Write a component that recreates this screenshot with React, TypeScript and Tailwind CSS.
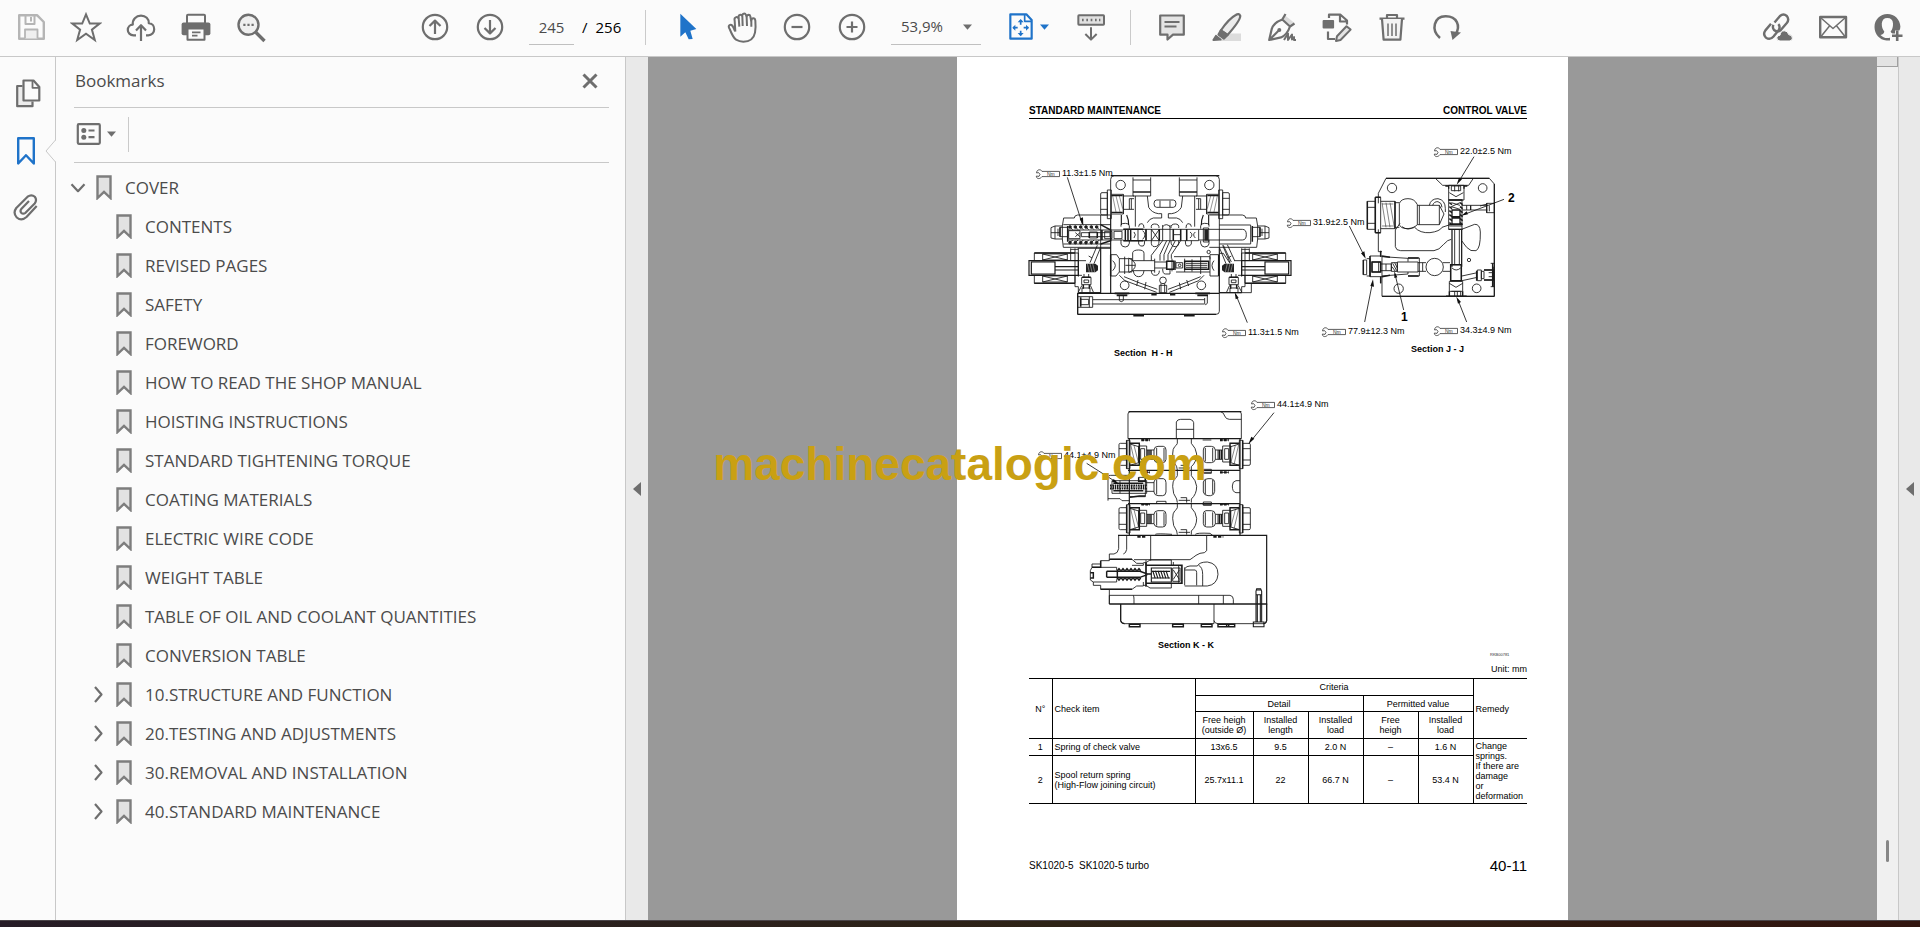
import React, { useState } from "react";

const SANS = "font-['Open_Sans','Noto_Sans',sans-serif]";
const ARIAL = "font-['Liberation_Sans',Arial,sans-serif]";

type IconProps = { viewBox?: string; className?: string; children: React.ReactNode };

function Icon({ viewBox = "0 0 32 32", className = "size-8", children }: IconProps) {
  return (
    <svg
      viewBox={viewBox}
      className={`${className} block shrink-0`}
      fill="none"
      stroke="currentColor"
      strokeWidth="2.2"
      strokeLinejoin="round"
      aria-hidden="true"
    >
      {children}
    </svg>
  );
}

function Tool({ label, wide = "w-[55px]", children }: { label: string; wide?: string; children: React.ReactNode }) {
  return (
    <button type="button" aria-label={label} className={`${wide} flex h-11 shrink-0 items-center justify-center text-[#6e6e6e]`}>
      {children}
    </button>
  );
}

function Caret({ className = "" }: { className?: string }) {
  return (
    <svg viewBox="0 0 9 6" className={`h-[6px] w-[9px] shrink-0 ${className}`} fill="currentColor" aria-hidden="true">
      <path d="M0 0.5H9L4.5 5.8Z" />
    </svg>
  );
}

function Toolbar() {
  const [page, setPage] = useState("245");
  return (
    <header className="flex h-[57px] shrink-0 items-center border-b border-[#c8c8c8] bg-[#fbfbfb] pb-[2px] pl-[3px] pr-[5px]">
      <Tool label="Save">
        <Icon className="size-8 text-[#b5b5b5]">
          <path d="M4.2 4.2H22L28.8 11V27.8H4.2Z" strokeWidth="2.4" />
          <path d="M10.5 4.5V13H19.5V4.5M16 6V10.5" strokeWidth="2" />
          <path d="M10 27.5V18.5H22.5V27.5" strokeWidth="1.8" fill="#efefef" />
        </Icon>
      </Tool>
      <Tool label="Star">
        <Icon>
          <path d="M16 3.4L19.8 12.6H29.6L21.9 18.6L24.8 29L16 22.8L7.2 29L10.1 18.6L2.4 12.6H12.2Z" strokeWidth="2" strokeLinejoin="miter" />
        </Icon>
      </Tool>
      <Tool label="Upload to cloud">
        <Icon>
          <path d="M11 24.3H8.6C5 24.3 2.8 21.7 2.8 18.9C2.8 16 5 13.7 7.8 13.6C7.3 8.4 11 4.6 16 4.6C20.7 4.6 24 8 23.8 12.2C27 12.4 29.2 15 29.2 18.2C29.2 21.6 26.7 24.3 23.3 24.3H21" />
          <path d="M16 30V14.5M11 19.5L16 14.2L21 19.5" />
        </Icon>
      </Tool>
      <Tool label="Print">
        <Icon>
          <rect x="7" y="3.8" width="18" height="9" rx="1" strokeWidth="2" />
          <path d="M3.6 11.5H28.4Q30.4 11.5 30.4 13.5V22.5Q30.4 24.3 28.4 24.3H3.6Q1.6 24.3 1.6 22.5V13.5Q1.6 11.5 3.6 11.5Z" fill="currentColor" stroke="none" />
          <rect x="7.5" y="17.5" width="17" height="11.3" fill="#fbfbfb" strokeWidth="2" />
          <path d="M12 21.3H20.5M12 24.6H17.5" strokeWidth="1.8" />
        </Icon>
      </Tool>
      <Tool label="Find">
        <Icon>
          <circle cx="13.5" cy="13.8" r="10" strokeWidth="2.4" fill="#efefef" />
          <path d="M21 21.5L29.5 30" strokeWidth="3.4" />
          <path d="M8.3 13.8h2.2M12.4 13.8h2.2M16.5 13.8h2.2" />
        </Icon>
      </Tool>

      <div className="w-[129px] shrink-0" />
      <Tool label="Previous page">
        <Icon>
          <circle cx="16" cy="16" r="12.2" />
          <path d="M16 23V10M10.5 15L16 9.6L21.5 15" />
        </Icon>
      </Tool>
      <Tool label="Next page">
        <Icon>
          <circle cx="16" cy="16" r="12.2" />
          <path d="M16 9V22M10.5 17L16 22.4L21.5 17" />
        </Icon>
      </Tool>
      <div className={`${SANS} ml-3 flex h-11 w-[92px] shrink-0 items-center text-[15px] text-black`}>
        <input
          aria-label="Page number"
          value={page}
          onChange={(e) => setPage(e.target.value)}
          className="h-9 w-[45px] border-b border-[#c0c0c0] bg-transparent text-center text-[15px] text-[#4b4b4b] outline-none"
        />
        <span className="ml-2">/</span>
        <span className="ml-2">256</span>
      </div>

      <div className="ml-6 h-[35px] w-px shrink-0 bg-[#cacaca]" />
      <div className="w-[13px] shrink-0" />
      <Tool label="Select">
        <Icon viewBox="153 33 96 96">
          <path d="M181 41V110L196 97L206 118L218 117L211 92L229 87Z" fill="#1f73c9" stroke="none" />
        </Icon>
      </Tool>
      <Tool label="Pan">
        <Icon viewBox="318 33 96 96">
          <path
            d="M345 93L340 82Q335 71 328 76Q324 79 329 87Q340 114 348 119Q358 125 370 125Q400 125 405 98Q408 84 406 62Q405 55 400 55Q394 55 394 63V80M394 66L391 49Q390 44 386 44Q379 45 380 53L381 78M380 52L378 45Q376 40 371 41Q366 42 367 48L368 78M367 49Q364 43 359 45Q355 46 356 53L358 80M357 58Q353 49 347 52Q342 54 344 62L346 95"
            strokeWidth="6"
          />
        </Icon>
      </Tool>
      <Tool label="Zoom out">
        <Icon>
          <circle cx="16" cy="16" r="12.2" />
          <path d="M10.5 16h11" />
        </Icon>
      </Tool>
      <Tool label="Zoom in">
        <Icon>
          <circle cx="16" cy="16" r="12.2" />
          <path d="M10.5 16h11M16 10.5v11" />
        </Icon>
      </Tool>
      <div className="ml-3 flex h-9 w-[90px] shrink-0 items-center border-b border-[#c0c0c0]">
        <select aria-label="Zoom level" className={`${SANS} w-[68px] appearance-none bg-transparent pl-[10px] text-[15px] text-[#4b4b4b] outline-none`}>
          <option>53,9%</option>
        </select>
        <Caret className="ml-1 text-[#6e6e6e]" />
      </div>
      <div className="w-4 shrink-0" />
      <Tool label="Fit page" wide="w-[60px]">
        <Icon viewBox="1158 33 96 96" className="size-8 text-[#1f73c9]">
          <path d="M1174 43H1222L1238 60V116H1174Z" strokeWidth="6.5" />
          <path d="M1217 43V64H1238" strokeWidth="5" />
          <path d="M1205 60V74M1205 92V106M1182 83H1196M1214 83H1228" strokeWidth="5" />
          <path d="M1196 67L1205 57L1214 67ZM1196 99L1205 109L1214 99ZM1189 74L1180 83L1189 92ZM1221 74L1230 83L1221 92Z" fill="currentColor" stroke="none" />
        </Icon>
        <Caret className="ml-[3px] text-[#1f73c9]" />
      </Tool>
      <div className="w-[6px] shrink-0" />
      <Tool label="Read mode">
        <Icon viewBox="1368 33 96 96">
          <rect x="1378" y="46" width="77" height="28" rx="2" fill="#e0e0e0" strokeWidth="6" />
          <path d="M1389 60h5M1402 60h5M1415 60h5M1428 60h5M1440 60h4" strokeWidth="7" />
          <path d="M1416 82V118M1399 102L1416 119L1433 102" strokeWidth="6" />
        </Icon>
      </Tool>

      <div className="ml-3 h-[35px] w-px shrink-0 bg-[#cacaca]" />
      <div className="w-[13px] shrink-0" />
      <Tool label="Comment">
        <Icon>
          <path d="M4.2 4.5H27.8V23.7H17L11.5 28.5V23.7H4.2Z" fill="#e4e4e4" />
          <path d="M8.5 11h15M8.5 15.5h12" strokeWidth="1.8" />
        </Icon>
      </Tool>
      <Tool label="Highlight">
        <Icon>
          <path d="M14 22.5H30V30H9Z" fill="#dcdcdc" stroke="none" />
          <path d="M24.8 4Q28 1.8 29.3 5Q29 10 16.5 24L9.8 19.5Q18 7.5 24.8 4Z" fill="#ececec" />
          <path d="M9.8 19.5L16.5 24L13 27.5L7.5 23.5Z" fill="currentColor" />
          <path d="M5 25L9.5 28.5L2.5 29Z" fill="currentColor" />
        </Icon>
      </Tool>
      <Tool label="Sign">
        <Icon>
          <path d="M18.5 4L28.5 12L24 14.5L16.5 7.5Z" fill="#dcdcdc" stroke="none" />
          <path d="M19.5 3L16.3 8.5M16.3 8.5L24 15.5L28.5 12.5M16.3 8.5Q7 12 5.6 18.5L3.2 29L15 26.4Q21 24 24 15.5M3.5 28.8L12.5 19.8" />
          <circle cx="13.3" cy="19" r="2" fill="currentColor" stroke="none" />
          <path d="M18 29L22 22.5V29L26 23.5V28.5L28 26V29H30" strokeWidth="2" />
        </Icon>
      </Tool>
      <Tool label="Edit PDF">
        <Icon>
          <path d="M8 7V3.7H19.5L26 9.5V13.5M19 4V10.5H26" />
          <rect x="1.6" y="9" width="11.5" height="8.5" rx="1" fill="currentColor" stroke="none" />
          <path d="M7 20.5V28H14" />
          <path d="M25.5 15.2L29.6 18.6L19.5 29L15 30L16 25.3Z" fill="#e4e4e4" strokeWidth="2" />
        </Icon>
      </Tool>
      <Tool label="Delete">
        <Icon>
          <path d="M3.5 7.7h25M11 7.2V4H21V7.2" />
          <path d="M6 8L7.6 28.7H24.4L26 8" fill="#f3f3f3" />
          <path d="M12 12.5V25M16 12.5V25M20 12.5V25" strokeWidth="1.5" />
        </Icon>
      </Tool>
      <Tool label="Rotate">
        <Icon>
          <path d="M9 27C-0.5 19 3 5.3 14.5 5.2C26 5 30 15 24.5 23.5" strokeWidth="2.5" />
          <path d="M19.5 20L30 21.5L21.5 29Z" fill="currentColor" stroke="none" />
        </Icon>
      </Tool>
      <div className="min-w-0 flex-1" />
      <Tool label="Share link">
        <Icon>
          <path d="M12.5 11.5L18 5Q21.5 2 24.8 5Q27.6 8.4 24.8 12L18.8 19Q15.3 21.8 12 19Q10 16.5 11.5 13.8" strokeWidth="2.4" />
          <path d="M16.3 13.2Q18.6 15.6 16.8 19L11.5 25.5Q8 29.6 3.9 26.6Q0.6 23.4 3.4 19.4L9 12.8" strokeWidth="2.4" />
          <path d="M18 30Q14.5 29.8 14.8 26.7Q15.2 24.2 18 24.2Q18.5 19.8 22.3 19.8Q26 19.8 26.7 23.6Q30.5 24 30.4 27.2Q30.2 30 27.2 30Z" fill="currentColor" stroke="#fbfbfb" strokeWidth="1" />
        </Icon>
      </Tool>
      <Tool label="Send by email">
        <Icon>
          <rect x="3.2" y="6" width="25.8" height="20.3" strokeWidth="2.4" />
          <path d="M4 7L16 17.5L28 7M4 25.5L12.5 15M28 25.5L19.7 15" strokeWidth="1.5" />
        </Icon>
      </Tool>
      <Tool label="Account">
        <Icon>
          <path d="M15.5 3C8 3 2.5 8.6 2.5 16C2.5 23 7.5 29 14.5 29.5H18V26.8Q12 28 8.5 24Q12 23 12.3 20.5Q9.6 17.5 9.8 12.3Q10.5 7 15.3 7Q20.7 7 21 12.5Q21.2 17.5 18.6 20.5Q19 22 20.5 22.5H23V19.5H27.3Q28.4 17.6 28.4 15.5C28 8.3 22.5 3 15.5 3Z" fill="currentColor" stroke="none" />
          <path d="M25.2 19.5V30M20 24.7H30.5" strokeWidth="2.6" />
        </Icon>
      </Tool>
    </header>
  );
}

function Rail() {
  return (
    <nav aria-label="Panels" className="relative flex w-14 shrink-0 flex-col items-start gap-[26px] border-r border-[#c8c8c8] bg-[#fbfbfb] pl-3 pt-5">
      <button type="button" aria-label="Page thumbnails" className="text-[#6e6e6e]">
        <Icon>
          <path d="M10.5 9H5.2V29.2H20.5V24.5" fill="#ececec" />
          <path d="M11.5 3.5H21.5L27.3 10V23.5H11.5Z" fill="#fbfbfb" />
          <path d="M20.5 4V10.8H27" strokeWidth="1.8" />
        </Icon>
      </button>
      <button type="button" aria-label="Bookmarks" className="text-[#1f73c9]">
        <Icon>
          <path d="M6.2 3.2H21.8V28.5L14 20.2L6.2 28.5Z" strokeWidth="2.4" />
        </Icon>
      </button>
      <button type="button" aria-label="Attachments" className="text-[#6e6e6e]">
        <Icon>
          <path
            d="M24.7 13L14.5 24Q9.5 28.5 4.8 24.5Q.6 20 4.3 15L15.6 3.7Q19.5 .8 22.8 3.8Q25.3 7 22.7 10.5L13.5 19.8Q11 21.5 9.2 19.7Q7.7 17.8 9.5 15.7L17 8"
          />
        </Icon>
      </button>
      <svg viewBox="0 0 11 22" className="absolute -right-px top-[83px] h-[22px] w-[11px]" aria-hidden="true">
        <path d="M11 0L1 11L11 22Z" fill="#fbfbfb" />
        <path d="M10.5 0L1 11L10.5 22" fill="none" stroke="#c8c8c8" />
      </svg>
    </nav>
  );
}

const BOOKMARKS = [
  { title: "CONTENTS" },
  { title: "REVISED PAGES" },
  { title: "SAFETY" },
  { title: "FOREWORD" },
  { title: "HOW TO READ THE SHOP MANUAL" },
  { title: "HOISTING INSTRUCTIONS" },
  { title: "STANDARD TIGHTENING TORQUE" },
  { title: "COATING MATERIALS" },
  { title: "ELECTRIC WIRE CODE" },
  { title: "WEIGHT TABLE" },
  { title: "TABLE OF OIL AND COOLANT QUANTITIES" },
  { title: "CONVERSION TABLE" },
  { title: "10.STRUCTURE AND FUNCTION", nested: true },
  { title: "20.TESTING AND ADJUSTMENTS", nested: true },
  { title: "30.REMOVAL AND INSTALLATION", nested: true },
  { title: "40.STANDARD MAINTENANCE", nested: true },
];

function Ribbon() {
  return (
    <svg viewBox="0 0 16 25" className="h-[25px] w-4 shrink-0" aria-hidden="true">
      <path d="M1.5 1.5H14.5V23L8 16.8L1.5 23Z" fill="#e2e2e2" stroke="#7d7d7d" strokeWidth="2.4" />
    </svg>
  );
}

function BookmarksPanel() {
  const [open, setOpen] = useState(true);
  return (
    <aside className="flex w-[570px] shrink-0 flex-col border-r border-[#c8c8c8] bg-[#fbfbfb] pl-[18px] pr-4">
      <div className="flex h-[51px] items-center justify-between border-b border-[#c8c8c8] pb-[2px]">
        <h1 className={`${SANS} pl-px text-[17px] text-[#4b4b4b]`}>Bookmarks</h1>
        <button type="button" aria-label="Close panel" className="mr-[11px] text-[#6e6e6e]">
          <Icon viewBox="0 0 16 16" className="size-4">
            <path d="M1.5 1.5L14.5 14.5M14.5 1.5L1.5 14.5" strokeWidth="3" />
          </Icon>
        </button>
      </div>
      <div className="flex h-[55px] items-center border-b border-[#c8c8c8] pb-[2px] pl-[2px]">
        <button type="button" aria-label="Options" className="flex items-center text-[#6e6e6e]">
          <Icon viewBox="0 0 26 22" className="h-[22px] w-[26px]">
            <rect x="1.8" y="1.2" width="22" height="19.6" rx="1" strokeWidth="2.2" />
            <path d="M12.5 7.5h6M12.5 14.2h6" />
            <circle cx="7.8" cy="7.5" r="2.5" fill="currentColor" stroke="none" />
            <circle cx="7.8" cy="14.2" r="2.5" fill="currentColor" stroke="none" />
          </Icon>
          <Caret className="ml-[5px]" />
        </button>
        <div className="ml-3 h-[35px] w-px bg-[#cacaca]" />
      </div>
      <div className={`${SANS} pt-[5px] text-[17px] text-[#4b4b4b]`}>
        <button type="button" onClick={() => setOpen(!open)} aria-expanded={open} className="flex h-[39px] items-center pl-[22px]">
          <span className="-ml-[26px] flex w-[26px]">
            <Icon viewBox="0 0 16 10" className="h-[10px] w-4 text-[#6e6e6e]">
              <path d="M1.5 1.2L8 8.2L14.5 1.2" />
            </Icon>
          </span>
          <Ribbon />
          <span className="ml-[13px]">COVER</span>
        </button>
        {open && (
          <ul>
            {BOOKMARKS.map((b) => (
              <li key={b.title}>
                <button type="button" className="flex h-[39px] items-center whitespace-nowrap pl-5">
                  <span className="flex w-[22px]">
                    {b.nested && (
                      <Icon viewBox="0 0 9 17" className="h-[17px] w-[9px] text-[#6e6e6e]">
                        <path d="M1 1L7.5 8.5L1 16" />
                      </Icon>
                    )}
                  </span>
                  <Ribbon />
                  <span className="ml-[13px]">{b.title}</span>
                </button>
              </li>
            ))}
          </ul>
        )}
      </div>
    </aside>
  );
}

const THIN = { strokeWidth: 2.6 };
const BOLD = { strokeWidth: 4.4 };

/* Port plug and the passages on one side of the H-H body. */
function BodyHalf() {
  return (
    <g>
      <circle cx="332" cy="285" r="14" />
      <path d="M369 262V318H422V262M369 270H422M376 318V410M412 318L416 352Q425 368 445 371H455V384H430Q418 386 412 398" />
      <path d="M369 306H422" {...BOLD} />
      <path d="M272 312Q272 308 276 308H292V375H276Q272 375 272 370ZM272 325H292M272 358H292" />
      <path d="M292 300H304V386H292ZM304 313H340V372H304M340 318H372M358 326V358M340 358H372M364 326V358M358 326H372M340 313V372" />
      <path d="M304 317H338M304 367H338M334 375V405M350 375Q356 388 356 405" strokeWidth={3.4} />
      <path d="M308 318L318 366M318 318L330 366M328 318L338 356" strokeWidth="1.4" />
      <path d="M465 330H440Q432 330 432 341Q432 352 440 352H465M450 332V351" />
      <path d="M333 410V404Q334 400 346 400Q358 400 358 408V416M333 450V462Q335 471 346 471Q356 471 358 460V452" />
      <path d="M386 410Q386 400 396 401Q402 402 402 414M386 452V462Q390 471 400 468Q404 466 404 452M424 414Q422 402 434 402Q448 402 447 414M424 452Q422 470 434 470Q448 470 447 452" />
    </g>
  );
}

/* Spool cap, solenoid and lower fitting on one side of section H-H. */
function SolenoidHalf() {
  return (
    <g>
      <path d="M302 375H203Q193 376 193 384H161L157 408H135L123 413V444L135 447H157L160 472H302M135 408V447M123 428H150M150 412H173V440H150ZM144 416V438M157 408V447" />
      <path d="M150 412V440M173 408V455" {...BOLD} />
      <path d="M57 512H205V556H57ZM64 516H135V552H64ZM135 520V548M135 530H205M135 540H205" strokeWidth={3.6} />
      <path d="M73 489H205V510M73 489V510M73 558V580H195V558M98 492H172V510H98ZM98 558H172V576H98ZM98 492L172 510M172 492L98 510M98 558L172 576M172 558L98 576" />
      <path d="M73 489H195M73 580H195" {...BOLD} />
      <path d="M182 475V510M182 478H205M195 475V590H205V608H272V475M205 475V560M205 512H228M205 556H216" />
      <path d="M228 521H256L264 527V541L256 547H228Z" fill="#222" stroke="none" />
      <path d="M232 521L238 546M240 521L246 546M248 521L254 546" stroke="#fff" strokeWidth="1.2" />
      <path d="M215 562H243V584H215ZM222 562V552M236 562V552M205 606L216 586M250 606L241 586M216 608V594H240V608M222 570H236V578H222Z" />
      <path d="M216 562H242M220 584V596M238 584V596" {...BOLD} />
      <path d="M262 466L240 518M272 472L252 521M236 498L246 504M205 608H272" />
    </g>
  );
}

function SectionHH() {
  return (
    <g>
      <path d="M302 610V268Q302 257 313 257H616Q628 257 628 268V664Q628 673 618 673H203V610" />
      <path d="M203 673V610H628M302 257H628M203 673H618" strokeWidth={3.6} />
      <BodyHalf />
      <g transform="matrix(-1 0 0 1 930 0)">
        <BodyHalf />
      </g>
      <SolenoidHalf />
      <g transform="matrix(-1 0 0 1 900 0)">
        <SolenoidHalf />
      </g>
      <path d="M272 375V610M302 375V610M160 404H302M160 462H302M203 475H302" />
      <path d="M172 420H340M172 450H340M340 418H566M340 452H566M566 418H697Q709 418 709 434Q709 450 697 450H566M628 405H722V462H628" />
      {[180, 196, 212, 228, 244, 260].map((x) => (
        <g key={x}>
          <circle cx={x} cy="411" r="4" fill="#222" />
          <circle cx={x} cy="458" r="4" fill="#222" />
          <path d={`M${x} 411L${x + 8} 419M${x} 458L${x + 8} 450`} />
        </g>
      ))}
      <path d="M176 422H210V446H176ZM196 428L210 440M210 428L196 440M214 428H300V440H214ZM238 426H262V444H238ZM274 420V450M284 424H306V446H284ZM312 424H336V446H312Z" />
      <path d="M272 404L302 420V452L272 462M238 426V444M262 426V444M276 420V450M346 418V452M354 418V452M362 418V452" {...BOLD} />
      <path d="M372 426Q380 434 372 444M384 418V452M398 422Q412 434 398 448M408 418V452M424 418L448 452M448 418L424 452M424 418V452M448 418V452M458 405V452M480 405V452M490 418V452M512 418V452M490 434H512M458 410Q469 398 480 410" />
      <path d="M340 418H400M340 452H400M408 418V452M448 418V452M490 418V452M512 418V452M530 418V452" {...BOLD} />
      <path d="M530 418V452M540 426Q552 434 540 444M556 426Q546 434 556 444M566 418V452M580 414H596V456H580Z" />
      <rect x="583" y="418" width="11" height="34" fill="#222" stroke="none" />
      <path d="M458 452L424 496V512M470 452L450 494V512M480 452L462 494V512M496 452L474 494V512M512 452L484 494V506" />
      <path d="M302 494H320L328 506H366V546H328L318 558H302M308 512Q324 526 308 542M328 506V546M344 500V552M356 506V546M366 512H434M366 542H434M434 506V548M434 516H470M434 534H470" />
      <path d="M356 504Q376 514 376 526Q376 538 356 548M346 526H376M368 510V488Q370 480 386 480Q402 480 402 490V512M370 542Q372 560 386 560Q400 560 402 542M424 542Q424 556 436 556Q448 556 448 542M458 536Q458 552 466 552H480V538" />
      <path d="M470 514H492V538H470ZM486 506V544M496 512V540M492 500H600V508M498 546H600M524 506V546M572 500V552M546 508V545M600 494H626V558H600ZM612 512Q600 526 612 542" />
      <path d="M470 514H492V538H470ZM524 514H596V538H524ZM302 494V558M626 494V558" {...BOLD} />
      <path d="M528 520H592M528 526H592M528 532H592M498 518H518V534H498Z" />
      <circle cx="509" cy="526" r="4" />
      <circle cx="596" cy="486" r="5" />
      <circle cx="344" cy="586" r="13" />
      <circle cx="574" cy="586" r="13" />
      <circle cx="459" cy="571" r="10" />
      <path d="M448 586H470V608H448ZM453 580V608M464 580V608M328 556L345 572L440 607M342 560L384 577L442 598M384 570L380 588M408 576L404 598M582 556L566 572L478 607M572 560L530 577L474 598M530 570L536 588M508 578L512 598" />
      <path d="M203 620H248V652H203ZM212 628H236V644H212ZM238 620V652M248 629H584M248 642H584M584 624V640Q586 648 592 640V618M328 618V632Q334 638 340 632V618" />
      <path d="M314 610H358M320 616H352M556 610H600M562 616H594M424 614H440M480 614H496M370 677H402M522 677H554M212 622V650" strokeWidth={5} />
      <path d="M628 608H724V580M628 490H640L660 520M640 466L664 516M652 464L674 512" />
      <path d="M172 262L217 402M712 698L678 615" />
      <path d="M220 408L209 386L219 382ZM674 606L686 624L677 628Z" fill="#111" stroke="none" />
    </g>
  );
}

function SectionJJ() {
  return (
    <g>
      <path d="M318 265H628L643 282V619H306V560M318 265L295 310V340M295 418V485H306M466 265L488 286M580 265L566 286H488" />
      <path d="M318 265H628M643 282V619M306 619H643" strokeWidth={3.4} />
      <circle cx="336" cy="294" r="14" />
      <circle cx="608" cy="294" r="13" />
      <circle cx="590" cy="595" r="13" />
      <circle cx="356" cy="596" r="14" />
      <circle cx="567" cy="510" r="5" />
      <circle cx="464" cy="531" r="26" />
      <path d="M262 334H286V418H262ZM262 352H286M262 400H286M286 322H302V428H286ZM302 334H345V416H302M345 338H358M345 412H358" />
      <path d="M286 322V428M262 334V418M345 334V416M286 322H302M286 428H302" {...BOLD} />
      <path d="M306 338L318 412M318 338L330 412M330 338L343 412M306 342H340M306 408H340" strokeWidth="1.6" />
      <path d="M358 340Q364 326 384 326Q404 326 412 344V404Q404 416 384 416Q362 416 358 404ZM366 410Q384 424 404 410M412 346H478V404H412M418 346V404M478 346L492 372L478 404M448 346Q452 326 474 326Q496 330 496 356V366M458 346Q462 334 474 335Q486 338 486 352" />
      <path d="M360 400L346 420V470Q348 482 362 482H462Q478 480 490 464Q504 448 514 448M545 452Q552 462 560 472Q572 486 588 482Q602 476 601 426Q600 402 584 403L545 418M404 412Q420 430 450 428Q480 424 486 412L510 404" />
      <path d="M506 286H552V330H506ZM514 288H542V302H514ZM524 286V304M536 286V304M508 308L528 320L550 308M506 330H546V418H506ZM546 346H572M546 360H572M572 346H622M572 360H622M560 346V360M600 348L622 342M620 340H643V368H620ZM628 346V364" />
      <path d="M496 288H506V296M552 296V288H562M506 330H548M508 404H546M506 418H548M516 418V530M545 418V530M620 340V368M572 346V360M516 360H540V380H516ZM516 384H540V402H516Z" strokeWidth={3.8} />
      <path d="M524 418V524M538 418V524M508 408H546M514 338L540 346M540 338L514 350M514 350L540 358" />
      {[338, 350, 362, 374, 386, 398].map((y) => (
        <path key={y} d={`M508 ${y}L516 ${y + 6}M540 ${y}L548 ${y + 6}`} {...BOLD} />
      ))}
      <path d="M250 510H260V554H250ZM260 506H270V558H260M270 498H306V560H270ZM302 484V500M302 560V580M276 516H302V546H276ZM302 522H334V542H302M306 500L384 505V515M306 558L384 552V546M384 504H418V558H384M334 518H352V544H334ZM352 516H414V546H352ZM414 518H438M414 544H438M428 518V544M488 518H510M488 544H510" />
      <path d="M250 510V554M270 498V560M276 516H302V546H276ZM306 498L330 502M306 560L330 556M302 482V500M302 560V580M384 504H416M384 558H416" {...BOLD} />
      <path d="M338 520L350 542M344 518L352 534M336 530L346 544M296 516V546M318 522V542" />
      <path d="M512 524H544V572H512ZM508 574H548V604H508ZM516 534Q528 546 542 534M508 580L528 592L548 580M514 604H542V619M524 604V619M532 604V619" />
      <path d="M512 524H544V572H512ZM498 619H560M508 604V619M548 604V619" {...BOLD} />
      <path d="M546 558L592 548M546 572L592 562M592 540H604V572H592ZM604 544H612V566H604ZM612 540H640V570H612M626 548H640M626 560H640M640 530V590M632 520H643M632 590H643" />
      <path d="M612 540H640V570H612M590 542V572M638 520V590" {...BOLD} />
      <path d="M582 200L538 272M672 328L556 372M208 408L252 496M254 696L277 580M371 660L345 552M560 696L534 630" />
      <path d="M530 284L546 268L537 263ZM544 377L564 373L560 364ZM257 506L253 484L243 490ZM279 568L282 590L271 588ZM343 544L352 562L343 564ZM529 620L543 636L534 641Z" fill="#111" stroke="none" />
    </g>
  );
}

function KPlug() {
  return (
    <g>
      <path d="M327 194Q327 190 331 190H350V256H331Q327 256 327 252ZM327 206H350M327 240H350M350 181H360V266H350ZM360 192L386 200V248L360 256M386 198H410V246H386ZM392 206H404V238H392ZM410 210H432M410 238H432M424 210V238" />
      <path d="M350 181V266M360 190H390M360 256H390M388 192V254M414 210V238M420 210V238" {...BOLD} />
      <path d="M362 194L376 254M372 196L386 250" strokeWidth="1.6" />
      <path d="M432 210Q433 199 444 199H460Q468 200 468 210V238Q467 248 458 248H444Q433 247 432 238ZM440 204V244M462 204V244" />
    </g>
  );
}

function SectionKK() {
  return (
    <g>
      <path d="M354 176V102Q354 95 362 95H688Q694 96 694 102V176M632 95Q642 98 644 108Q648 118 658 118H694M499 176V126Q502 118 512 118H540Q550 120 551 128V176M499 148H551" />
      <path d="M354 176H694M354 271H690M354 371H690M324 466H770V672H298M358 176V466M690 176V466M356 95H694" strokeWidth={3.6} />
      <KPlug />
      <g transform="matrix(-1 0 0 1 1048 0)">
        <KPlug />
      </g>
      <g transform="translate(0 193)">
        <KPlug />
        <g transform="matrix(-1 0 0 1 1048 0)">
          <KPlug />
        </g>
      </g>
      {[0, 97, 193].map((dy) => (
        <g key={dy} transform={`translate(0 ${dy})`}>
          <path d="M502 176V190Q500 196 494 200Q488 206 488 222Q488 246 500 260L502 271M544 176V190Q558 204 560 222Q560 246 544 260V271M506 264H540M512 256H530V271M394 180H420M630 180H656M578 180H604" />
          <path d="M394 180H420M630 180H656" strokeWidth="7" strokeDasharray="8 4" />
        </g>
      ))}
      <path d="M580 306Q582 296 594 296H604Q614 298 614 308V334Q613 346 602 347H594Q582 346 580 336ZM586 300V342M608 300V342M432 306Q433 296 444 296H460Q468 297 468 308V336Q467 347 458 347H444Q433 346 432 336ZM440 300V343M690 302H678Q667 304 667 318Q667 336 678 338H690M580 366H604V376H580ZM580 268H604V280H580ZM440 371V364H468V371" />
      <path d="M294 362V290Q296 286 302 286H358M294 356H330L336 362H358M306 302H410V340H306ZM406 308H432M406 334H432M360 350H406V292H386M316 302V312M330 302V340" />
      <path d="M360 352L388 348H406M386 292V304H406V292M310 310H400M310 332H400" {...BOLD} />
      <path d="M300 321H412" strokeWidth="15" strokeDasharray="5 2" />
      <path d="M300 321H412" stroke="#fff" strokeWidth="2" strokeDasharray="3 3" />
      <path d="M326 466V506Q324 520 312 522H298V540M350 466V508Q348 520 340 522M422 466V542M590 466V512Q586 520 570 520Q556 526 550 532L540 539H372M436 463Q440 460 486 463M556 463Q560 458 600 460L608 466" />
      <path d="M382 469H410M610 469H640" strokeWidth="8" strokeDasharray="10 4" />
      <path d="M272 542H298V538H366L380 550H400V556H366M272 542V562H246V552H272M246 562L241 572V600L250 606V616H272V628H366L380 618H400V606M272 562H320V570M250 606H320V598M298 628V672M400 548H408V616H400M408 548L420 540H484V556M408 616L420 624H484V610" />
      <path d="M272 542V562H246M272 628H366M241 578H250V594H241M408 548V620M408 556H516V610H408M300 538H366" {...BOLD} />
      <path d="M290 574H390L412 582H424M290 592H390L412 584M290 574V592M322 570V598" {...BOLD} />
      {[322, 334, 346, 358, 370, 382].map((x) => (
        <path key={x} d={`M${x} 572L${x + 5} 566L${x + 10} 572M${x} 594L${x + 5} 600L${x + 10} 594`} {...BOLD} />
      ))}
      <path d="M424 564H484V606H424ZM428 572L436 596M436 572L444 596M444 572L452 596M452 572L460 596M460 572L468 596M468 572L476 596M426 574H480M426 594H480" strokeWidth={3.4} />
      <path d="M488 564H510V604H488ZM490 570L508 598M508 570L490 598M506 558V608M514 556V610M524 562V616M524 566Q530 558 540 558H562Q568 546 592 546Q624 550 624 583Q622 614 592 618H524M524 570H556Q560 572 560 578V616M566 556Q578 562 578 583Q578 606 578 618M408 540V556M490 546V556" />
      <path d="M298 646H660Q670 648 670 658V672M370 646Q372 650 372 658V672M566 646V672M640 646V672M298 646V672M332 672V722Q334 731 344 731H612V672M612 722Q614 731 624 731H762Q770 730 770 722V672" />
      <path d="M298 672H770V722Q768 731 760 731M332 672V722Q334 731 344 731" strokeWidth={3.6} />
      <path d="M358 733H390V740H358ZM488 733H520V740H488ZM574 733H606V740H574ZM624 733H674V740H624ZM656 731V740M650 733V740" {...BOLD} />
      <path d="M738 726V634L740 626H752L755 634V726M738 644H755M742 644V726M751 644V726M730 726H762V740H730ZM738 630H755" strokeWidth={3.2} />
      <path d="M792 98L722 184M230 250L318 306" />
      <path d="M715 193L733 176L724 170ZM328 313L306 305L311 297Z" fill="#111" stroke="none" />
    </g>
  );
}

function Torque({ x, y, children }: { x: number; y: number; children: string }) {
  return (
    <g>
      <path
        d={`M${x + 6} ${y - 4.6}H${x + 23.5}V${y + 0.6}H${x + 6}C${x + 3.5} ${y + 4} ${x} ${y + 2.5} ${x + 0.4} ${y}L${x + 3} ${y + 0.4}L${x + 4} ${y - 1.6}L${x + 2.6} ${y - 3.4}L${x + 0.6} ${y - 3}C${x + 0.6} ${y - 7} ${x + 5} ${y - 7} ${x + 6} ${y - 4.6}Z`}
        fill="none"
        stroke="#333"
        strokeWidth="0.8"
      />
      <text x={x + 11} y={y} fontSize="5" fill="#333">
        Nm
      </text>
      <text x={x + 26} y={y} fontSize="9">
        {children}
      </text>
    </g>
  );
}

function Drawings() {
  return (
    <svg viewBox="0 0 498 530" className={`${ARIAL} mt-[11px] block w-full overflow-visible`} role="img" aria-label="Control valve sections">
      <g fill="none" stroke="#1a1a1a" {...THIN}>
        <g transform="translate(-19 -40) scale(0.33333)">
          <SectionHH />
        </g>
        <g transform="translate(251 -40) scale(0.33333)">
          <SectionJJ />
        </g>
        <g transform="translate(-19 250) scale(0.33333)">
          <SectionKK />
        </g>
      </g>
      <g fill="#000">
        <Torque x={7} y={46}>11.3±1.5 Nm</Torque>
        <Torque x={193} y={205}>11.3±1.5 Nm</Torque>
        <Torque x={405} y={24}>22.0±2.5 Nm</Torque>
        <Torque x={258} y={95}>31.9±2.5 Nm</Torque>
        <Torque x={293} y={204}>77.9±12.3 Nm</Torque>
        <Torque x={405} y={203}>34.3±4.9 Nm</Torque>
        <Torque x={222} y={277}>44.1±4.9 Nm</Torque>
        <Torque x={9} y={328}>44.1±4.9 Nm</Torque>
        <g fontWeight="bold" fontSize="9">
          <text x="85" y="226" xmlSpace="preserve">Section  H - H</text>
          <text x="382" y="222">Section J - J</text>
          <text x="129" y="518">Section K - K</text>
        </g>
        <g fontWeight="bold" fontSize="12">
          <text x="479" y="72">2</text>
          <text x="372" y="191">1</text>
        </g>
        <text x="461" y="526" fontSize="4" fill="#333">RKB00781</text>
      </g>
    </svg>
  );
}

function SpringTable() {
  return (
    <table className="w-full table-fixed border-collapse border-y border-black text-center text-[9px] leading-[10px] [&_td]:border [&_td]:border-black [&_td]:p-0 [&_th]:border [&_th]:border-black [&_th]:p-0 [&_th]:font-normal">
      <colgroup>
        <col className="w-[23px]" />
        <col className="w-[143px]" />
        <col className="w-[58px]" />
        <col className="w-[55px]" />
        <col className="w-[55px]" />
        <col className="w-[55px]" />
        <col className="w-[55px]" />
        <col />
      </colgroup>
      <thead>
        <tr className="h-[17px]">
          <th rowSpan={3} className="border-l-0!">N°</th>
          <th rowSpan={3} className="pl-[2px]! text-left">Check item</th>
          <th colSpan={5}>Criteria</th>
          <th rowSpan={3} className="border-r-0! pl-[2px]! text-left">Remedy</th>
        </tr>
        <tr className="h-4">
          <th colSpan={3}>Detail</th>
          <th colSpan={2}>Permitted value</th>
        </tr>
        <tr className="h-[27px]">
          <th>Free heigh<br />(outside Ø)</th>
          <th>Installed<br />length</th>
          <th>Installed<br />load</th>
          <th>Free<br />heigh</th>
          <th>Installed<br />load</th>
        </tr>
      </thead>
      <tbody>
        <tr className="h-[17px]">
          <td className="border-l-0!">1</td>
          <td className="pl-[2px]! text-left">Spring of check valve</td>
          <td>13x6.5</td>
          <td>9.5</td>
          <td>2.0 N</td>
          <td>–</td>
          <td>1.6 N</td>
          <td rowSpan={2} className="border-r-0! pl-[2px]! text-left">
            Change<br />springs.<br />If there are<br />damage<br />or<br />deformation
          </td>
        </tr>
        <tr className="h-12">
          <td className="border-l-0!">2</td>
          <td className="pl-[2px]! text-left">Spool return spring<br />(High-Flow joining circuit)</td>
          <td>25.7x11.1</td>
          <td>22</td>
          <td>66.7 N</td>
          <td>–</td>
          <td>53.4 N</td>
        </tr>
      </tbody>
    </table>
  );
}

function DocumentPage() {
  return (
    <article className={`${ARIAL} w-[611px] shrink-0 bg-white pl-[72px] pr-[41px] pt-12 text-black`}>
      <div className="flex items-center justify-between border-b border-black pb-px text-[10px] font-bold leading-[12px]">
        <h2>STANDARD MAINTENANCE</h2>
        <h2>CONTROL VALVE</h2>
      </div>
      <Drawings />
      <p className="pb-[3px] pt-1 text-right text-[9px] leading-[11px]">Unit: mm</p>
      <SpringTable />
      <footer className="mt-[54px] flex items-center justify-between text-[10px] leading-4">
        <span className="whitespace-pre">SK1020-5  SK1020-5 turbo</span>
        <span className="text-[15px] leading-4">40-11</span>
      </footer>
    </article>
  );
}

function Strip({ label, wide }: { label: string; wide: string }) {
  return (
    <button type="button" aria-label={label} className={`${wide} flex shrink-0 items-center justify-center bg-[#e9e9e9]`}>
      <svg viewBox="0 0 8 14" className="h-[14px] w-2" aria-hidden="true">
        <path d="M8 0V14L0 7Z" fill="#6e6e6e" />
      </svg>
    </button>
  );
}

export default function App() {
  return (
    <div className="relative flex h-screen flex-col overflow-hidden bg-[#fbfbfb]">
      <Toolbar />
      <div className="flex min-h-0 flex-1">
        <Rail />
        <BookmarksPanel />
        <Strip label="Collapse bookmarks" wide="w-[22px]" />
        <main className="flex min-w-0 flex-1 justify-center overflow-hidden bg-[#999999]">
          <DocumentPage />
        </main>
        <div className="flex w-[22px] shrink-0 flex-col items-center justify-between border-r border-[#c8c8c8] bg-[#f0f0f0]">
          <div className="h-[10px] w-full border-b border-r border-[#a0a0a0] bg-[#e3e3e3]" />
          <div className="mb-[58px] h-[22px] w-[3px] rounded-sm bg-[#868686]" />
        </div>
        <Strip label="Expand tools" wide="w-[21px]" />
      </div>
      <div className="h-[7px] shrink-0 border-t border-[#4a4448] bg-linear-to-r from-[#261c26] via-[#2e2316] via-55% to-[#32150f]" />
      <div className="pointer-events-none absolute inset-0 flex items-center justify-center">
        <p className={`${ARIAL} text-[46px] font-bold leading-none text-[#c9a013]`}>machinecatalogic.com</p>
      </div>
    </div>
  );
}
